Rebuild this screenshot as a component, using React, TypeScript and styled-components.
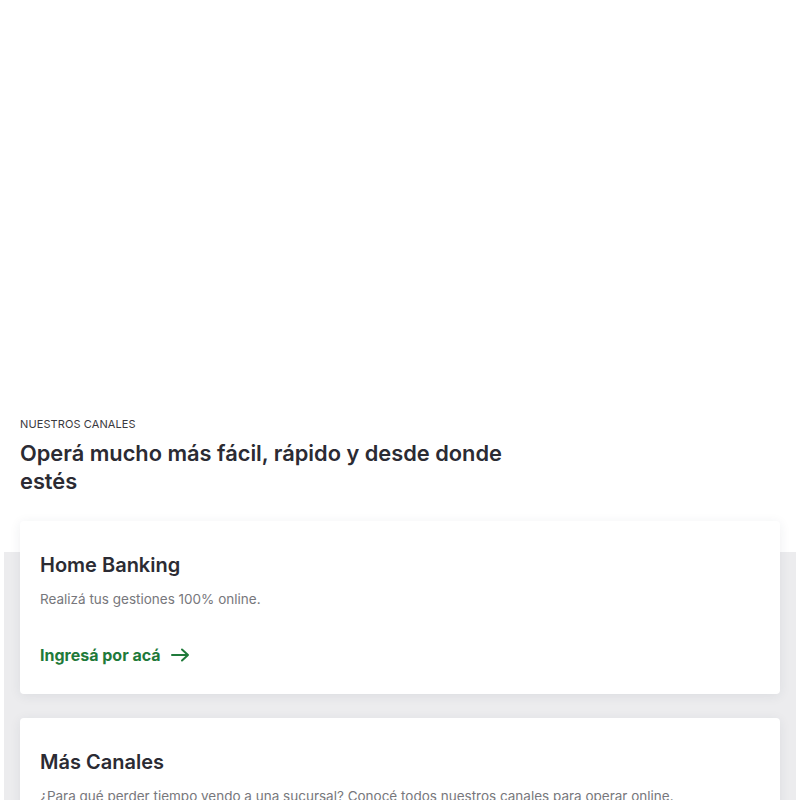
import styled, { createGlobalStyle } from "styled-components";

const GlobalStyle = createGlobalStyle`
    body {
        margin: 0;
        background: #ffffff;
        font-family: Inter, "Liberation Sans", sans-serif;
        color: #2b2b33;
    }
`;

const Page = styled.div`
    width: 800px;
    display: flex;
    flex-direction: column;
`;

// blank banner area above the intro
const Banner = styled.div`
    height: 416px;
`;

const Intro = styled.div`
    padding: 0 20px;
    display: flex;
    flex-direction: column;
    gap: 7px;
`;

const Eyebrow = styled.span`
    font-size: 11px;
    line-height: 16px;
    color: #3a3a40;
    letter-spacing: 0.1px;
`;

const Title = styled.h2`
    margin: 0;
    max-width: 500px;
    font-size: 21.8px;
    line-height: 28px;
    font-weight: 600;
    color: #2b2b33;
`;

const Panel = styled.div`
    margin: 57px 4px 0;
    padding: 0 16px 40px;
    background: #ececee;
    display: flex;
    flex-direction: column;
    gap: 24px;
`;

const Card = styled.div<{ $lift?: number }>`
    margin-top: ${p => (p.$lift ? `-${p.$lift}px` : "0")};
    background: #ffffff;
    border-radius: 4px;
    padding: 30px 20px 27px;
    box-shadow: 0 2px 12px rgba(40, 50, 80, 0.08);
    display: flex;
    flex-direction: column;
`;

const CardTitle = styled.h3`
    margin: 0;
    font-size: 20px;
    line-height: 28px;
    font-weight: 600;
    color: #2b2b33;
`;

const CardText = styled.p`
    margin: 10px 0 0;
    font-size: 13.5px;
    line-height: 20px;
    color: #77777c;
`;

const CardLink = styled.a`
    margin-top: 34px;
    display: flex;
    align-items: center;
    gap: 10px;
    font-size: 16px;
    line-height: 24px;
    font-weight: 700;
    color: #1f7a3a;
    text-decoration: none;
    cursor: pointer;
`;

function Arrow() {
    return (
        <svg width="19" height="14" viewBox="0 0 19 14" fill="none">
            <path d="M1 7h16M11 1.5L17 7l-6 5.5" stroke="#1f7a3a" strokeWidth="2" strokeLinecap="round" strokeLinejoin="round" />
        </svg>
    );
}

export default function App() {
    return (
        <Page>
            <GlobalStyle />
            <Banner />
            <Intro>
                <Eyebrow>NUESTROS CANALES</Eyebrow>
                <Title>Operá mucho más fácil, rápido y desde donde estés</Title>
            </Intro>
            <Panel>
                <Card $lift={31}>
                    <CardTitle>Home Banking</CardTitle>
                    <CardText>Realizá tus gestiones 100% online.</CardText>
                    <CardLink>Ingresá por acá <Arrow /></CardLink>
                </Card>
                <Card>
                    <CardTitle>Más Canales</CardTitle>
                    <CardText>¿Para qué perder tiempo yendo a una sucursal? Conocé todos nuestros canales para operar online.</CardText>
                    <CardLink>Conocelos <Arrow /></CardLink>
                </Card>
            </Panel>
        </Page>
    );
}
